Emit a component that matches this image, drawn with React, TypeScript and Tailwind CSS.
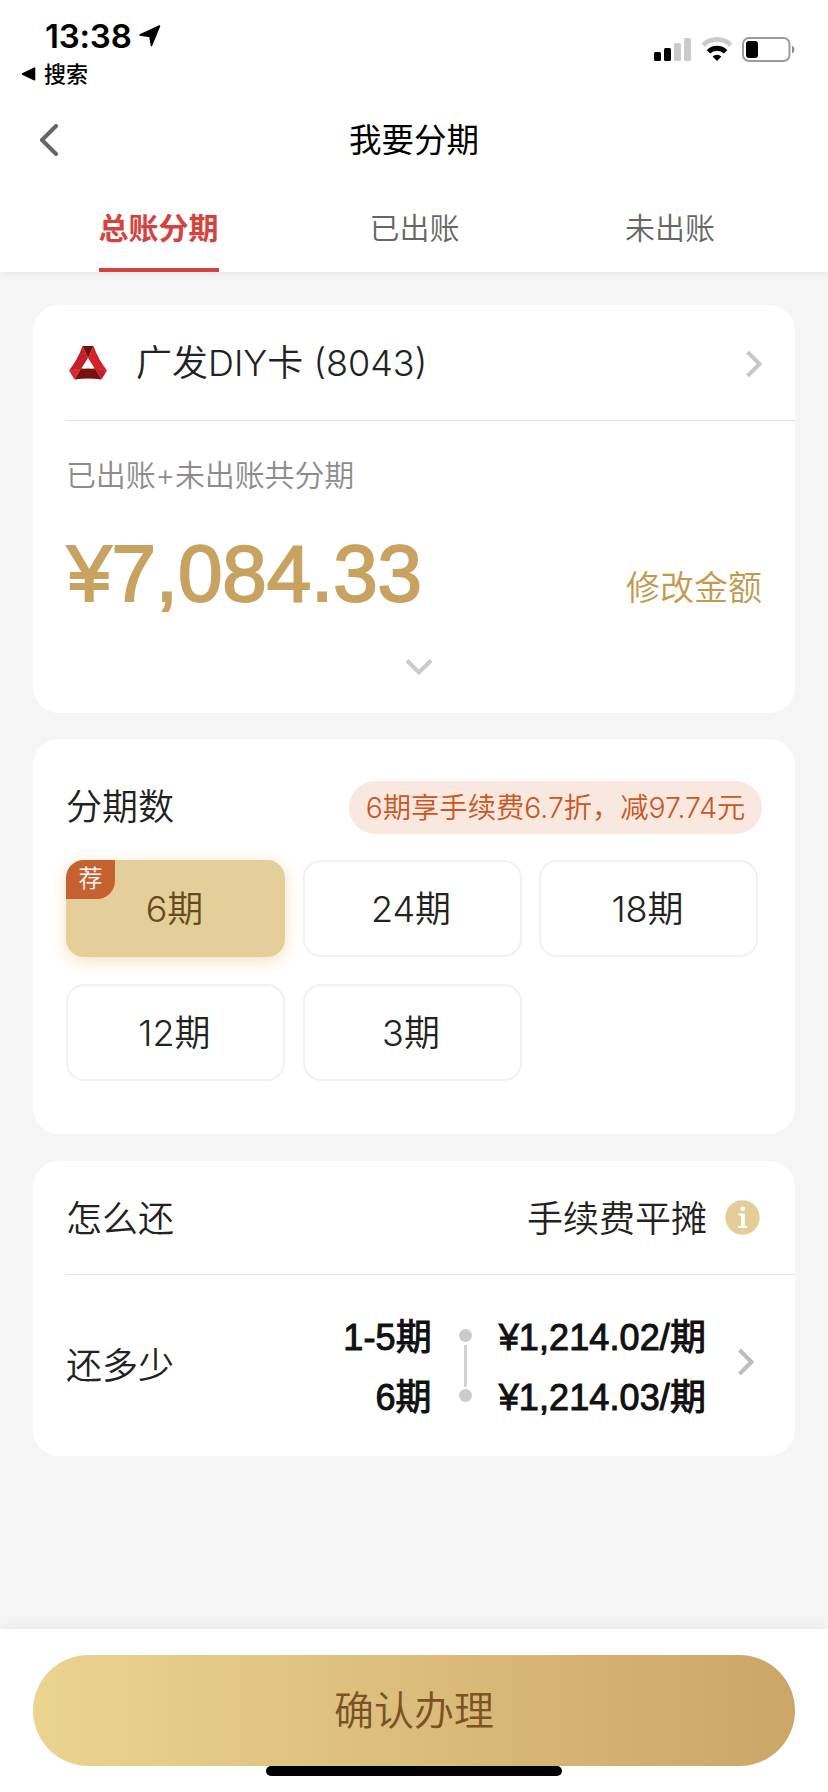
import type { ReactNode } from "react"

const terms = ["6期", "24期", "18期", "12期", "3期"]

const plan = [
  { period: "1-5期", amount: "¥1,214.02/期" },
  { period: "6期", amount: "¥1,214.03/期" },
]

function StatusBar() {
  return (
    <div className="h-[94px] flex justify-between text-black">
      <div className="pl-[21px] pt-[15px]">
        <div className="flex items-center pl-[24px] h-[42px]">
          <span className="font-['Inter'] font-semibold text-[33px] leading-[42px] tracking-[-0.2px]">13:38</span>
          <svg className="ml-[7px]" width="22" height="22" viewBox="0 0 22 22">
            <path d="M20.5 1 L12.5 20.5 L11 11.5 L1 10 Z" fill="#000" stroke="#000" strokeWidth="1.6" strokeLinejoin="round" />
          </svg>
        </div>
        <div className="flex items-center h-[34px]">
          <svg width="15" height="14" viewBox="0 0 15 14">
            <path d="M1.5 7 L13.5 1.2 V12.8 Z" fill="#000" stroke="#000" strokeWidth="1.6" strokeLinejoin="round" />
          </svg>
          <span className="ml-[8px] text-[22px] leading-[34px] font-medium">搜索</span>
        </div>
      </div>

      <div className="flex items-start gap-[9px] pt-[37px] pr-[32px]">
        <svg width="38" height="25" viewBox="0 0 38 25">
          <rect x="0" y="15" width="7" height="9" rx="1.5" fill="#000" />
          <rect x="10" y="11" width="7" height="13" rx="1.5" fill="#000" />
          <rect x="20" y="6" width="7" height="18" rx="1.5" fill="#cbcbcb" />
          <rect x="30" y="1" width="7" height="23" rx="1.5" fill="#cbcbcb" />
        </svg>
        <svg width="32" height="25" viewBox="0 0 32 25">
          <path d="M2.2 8.1 A19.5 19.5 0 0 1 29.8 8.1" fill="none" stroke="#cbcbcb" strokeWidth="4.6" />
          <path d="M7.4 14.9 A12 12 0 0 1 24.6 14.9" fill="none" stroke="#000" strokeWidth="4.8" />
          <path d="M16 24 L11.6 19.6 A6.4 6.4 0 0 1 20.4 19.6 Z" fill="#000" />
        </svg>
        <svg width="54" height="25" viewBox="0 0 54 25">
          <rect x="1" y="1" width="46.5" height="23" rx="6" fill="none" stroke="#9b9b9b" strokeWidth="2" />
          <rect x="4" y="4" width="12" height="17" rx="3" fill="#000" />
          <path d="M50 8.5 A4.5 4.5 0 0 1 50 16.5 Z" fill="#8a8a8a" />
        </svg>
      </div>
    </div>
  )
}

function CardLogo() {
  return (
    <svg width="40" height="36" viewBox="0 0 40 36">
      <path d="M14.5 1 H25.5 L20 13 Z" fill="#6d0f0c" />
      <path d="M14.5 1 L20 13 L13 24 L1 25.5 Q10 14 14.5 1 Z" fill="#c4202a" />
      <path d="M25.5 1 L20 13 L27 24 L39 25.5 Q30 14 25.5 1 Z" fill="#d4222a" />
      <path d="M1 25.5 L13 23.5 L6.5 34.5 Z" fill="#d92a30" />
      <path d="M39 25.5 L27 23.5 L33.5 34.5 Z" fill="#c4202a" />
      <path d="M13 23.5 H27 L33.5 34.5 Q20 32.5 6.5 34.5 Z" fill="#76110e" />
      <path d="M20 14.5 L25 23.5 Q20 22.5 15 23.5 Z" fill="#fff" />
    </svg>
  )
}

function ChevronRight({ color }: { color: string }) {
  return (
    <svg width="18" height="28" viewBox="0 0 18 28">
      <path d="M2.5 2 L14.5 14 L2.5 26" fill="none" stroke={color} strokeWidth="4" />
    </svg>
  )
}

function Card({ className, children }: { className: string; children: ReactNode }) {
  return <section className={`mx-[33px] bg-white rounded-[26px] pl-[33px] ${className}`}>{children}</section>
}

export default function App() {
  return (
    <div className="w-[828px] h-[1792px] flex flex-col overflow-hidden bg-[#f5f5f5] font-['Inter','Noto_Sans_CJK_SC',sans-serif] font-[350] text-[#222]">
      {/* Header */}
      <header className="h-[272px] shrink-0 bg-white shadow-[0_2px_6px_rgba(0,0,0,0.06)]">
        <StatusBar />
        <div className="h-[92px] grid grid-cols-[1fr_auto_1fr] items-center">
          <svg className="ml-[39px]" width="20" height="32" viewBox="0 0 20 32">
            <path d="M17 2 L3 16 L17 30" fill="none" stroke="#666" strokeWidth="4" strokeLinecap="round" strokeLinejoin="round" />
          </svg>
          <h1 className="pt-[2px] text-[32.5px] leading-[48px] font-normal text-black">我要分期</h1>
        </div>
        <nav className="h-[86px] px-[46px] grid grid-cols-[225px_287px_1fr] text-[30px] leading-[84px] text-[#666] text-center">
          <div className="flex justify-center">
            <span className="h-[86px] border-b-[4px] border-[#d4433e] text-[#d4433e] font-bold">总账分期</span>
          </div>
          <span>已出账</span>
          <span>未出账</span>
        </nav>
      </header>

      {/* Card & amount */}
      <Card className="mt-[33px] h-[408px] shrink-0">
        <div className="h-[116px] flex items-center border-b border-[#e2e2e2]">
          <div className="ml-[2px] pt-px">
            <CardLogo />
          </div>
          <span className="ml-[28px] flex-1 text-[36px] leading-[52px]">广发DIY卡 (8043)</span>
          <div className="pr-[32px] pt-[2px]">
            <ChevronRight color="#c7c7c7" />
          </div>
        </div>
        <p className="mt-[32px] text-[30px] leading-[44px] tracking-[-0.15px] text-[#8c8c8c]">已出账+未出账共分期</p>
        <div className="mt-[27px] h-[100px] flex justify-between items-center pr-[33px]">
          <span className="ml-px font-['Liberation_Sans',sans-serif] text-[80px] leading-[92px] tracking-[-0.1px] text-[#c8a261] [-webkit-text-stroke:2px_#c8a261]">
            ¥7,084.33
          </span>
          <span className="mt-[27px] text-[34px] leading-[48px] text-[#c39a4d]">修改金额</span>
        </div>
        <div className="flex justify-center pt-[34px] pr-[23px]">
          <svg width="28" height="18" viewBox="0 0 28 18">
            <path d="M2 2.5 L14 14.5 L26 2.5" fill="none" stroke="#c9cacc" strokeWidth="4" />
          </svg>
        </div>
      </Card>

      {/* Number of terms */}
      <Card className="mt-[26px] h-[395px] shrink-0">
        <div className="pt-[42px] h-[121px] flex justify-between items-start pr-[33px]">
          <h2 className="text-[36px] leading-[52px]">分期数</h2>
          <span className="w-[413px] h-[53px] rounded-full bg-[#f9e8e0] text-center text-[28.3px] leading-[54px] text-[#cb5620]">
            6期享手续费6.7折，减97.74元
          </span>
        </div>
        <div className="grid grid-cols-[219px_219px_219px] gap-x-[17.5px] gap-y-[27px]">
          {terms.map((term, i) =>
            i === 0 ? (
              <button
                key={term}
                className="relative h-[97px] pr-[2px] rounded-[18px] bg-[#e4cf9b] text-[36px] text-[#67491e] shadow-[0_4px_16px_rgba(228,180,100,0.4)]"
              >
                {term}
                <span className="absolute left-0 top-0 w-[49px] h-[39px] rounded-tl-[18px] rounded-br-[18px] bg-[#c86130] text-white text-[24px] leading-[38px] text-center">
                  荐
                </span>
              </button>
            ) : (
              <button key={term} className="h-[97px] pr-[2px] rounded-[18px] border-2 border-[#f1f1f1] text-[36px]">
                {term}
              </button>
            )
          )}
        </div>
      </Card>

      {/* Repayment */}
      <Card className="mt-[27px] h-[295px] shrink-0">
        <div className="h-[114px] flex items-center justify-between pr-[35px] border-b border-[#e2e2e2]">
          <h2 className="pt-[2px] text-[36px] leading-[52px]">怎么还</h2>
          <div className="flex items-center">
            <span className="pt-[3px] text-[36px] leading-[52px]">手续费平摊</span>
            <svg className="ml-[18px]" width="35" height="35" viewBox="0 0 35 35">
              <circle cx="17.5" cy="17.5" r="17.2" fill="#e4cd98" />
              <circle cx="17.8" cy="8.8" r="2.4" fill="#fff" />
              <path d="M13.5 13.5 H19.8 V26 H22.3 V28 H13.3 V26 H16 V15.5 H13.5 Z" fill="#fff" />
            </svg>
          </div>
        </div>
        <div className="h-[181px] flex items-center pr-[40px]">
          <h2 className="flex-1 pt-px text-[36px] leading-[52px]">还多少</h2>
          <div className="pt-[4px] text-right font-['Liberation_Sans','Noto_Sans_CJK_SC',sans-serif] font-normal text-[36px] leading-[60px] tracking-[0.1px] text-[#111] [-webkit-text-stroke:1px_#111]">
            {plan.map((p) => (
              <div key={p.period}>{p.period}</div>
            ))}
          </div>
          <div className="w-[67px] flex flex-col items-center">
            <span className="size-[13px] rounded-full bg-[#cbcbcb]"></span>
            <span className="my-[2.5px] w-[3px] h-[42px] bg-[#d2d2d2]"></span>
            <span className="size-[13px] rounded-full bg-[#cbcbcb]"></span>
          </div>
          <div className="pt-[4px] font-['Liberation_Sans','Noto_Sans_CJK_SC',sans-serif] font-normal text-[36px] leading-[60px] tracking-[0.1px] text-[#111] [-webkit-text-stroke:1px_#111]">
            {plan.map((p) => (
              <div key={p.period}>{p.amount}</div>
            ))}
          </div>
          <div className="ml-[31px] pb-[7px]">
            <ChevronRight color="#bdbdbd" />
          </div>
        </div>
      </Card>

      {/* Confirm */}
      <footer className="mt-auto h-[163px] shrink-0 bg-white px-[33px] pt-[26px] shadow-[0_-3px_12px_rgba(0,0,0,0.05)]">
        <button className="block w-full h-[111px] rounded-full bg-linear-to-r from-[#ebd490] to-[#cba667] text-[40px] text-[#7b5126]">
          确认办理
        </button>
        <div className="mx-auto w-[296px] h-[10px] rounded-full bg-black"></div>
      </footer>
    </div>
  )
}
